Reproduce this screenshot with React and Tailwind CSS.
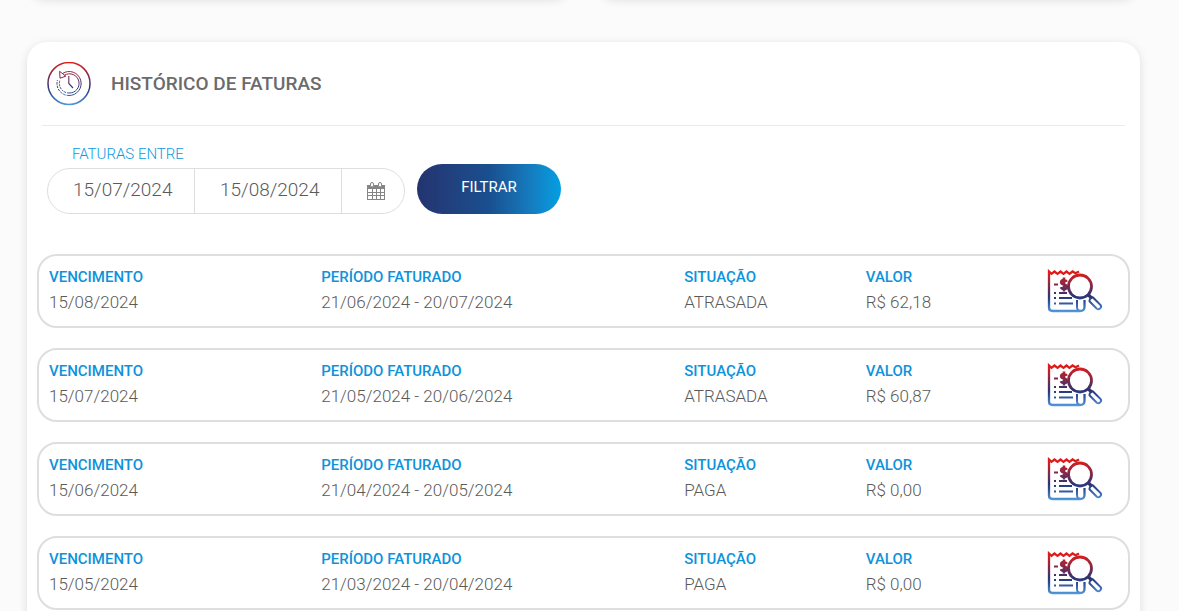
import { useState } from "react"

const invoices = [
  { due: "15/08/2024", period: "21/06/2024 - 20/07/2024", status: "ATRASADA", value: "R$ 62,18" },
  { due: "15/07/2024", period: "21/05/2024 - 20/06/2024", status: "ATRASADA", value: "R$ 60,87" },
  { due: "15/06/2024", period: "21/04/2024 - 20/05/2024", status: "PAGA", value: "R$ 0,00" },
  { due: "15/05/2024", period: "21/03/2024 - 20/04/2024", status: "PAGA", value: "R$ 0,00" },
]

function HistoryIcon() {
  return (
    <svg width="44" height="44" viewBox="0 0 44 44" fill="none" stroke="url(#history-fill)" aria-hidden="true">
      <defs>
        <linearGradient id="history-fill" gradientUnits="userSpaceOnUse" x1="0" y1="0" x2="0" y2="44">
          <stop offset="0" stopColor="#e31b17" />
          <stop offset="0.55" stopColor="#3a3272" />
          <stop offset="0.75" stopColor="#2f56a0" />
          <stop offset="1" stopColor="#559fe3" />
        </linearGradient>
      </defs>
      <circle cx="22" cy="21.500" r="21" strokeWidth="1.5" />
      <path d="M15.500 11.500A12 12 0 1 1 22 33.500" strokeWidth="1" />
      <path d="M17.500 13.200A9.600 9.600 0 1 1 22 31" strokeWidth="1" />
      <path d="M22 33.500A12 12 0 0 1 10.500 18" strokeWidth="1" strokeDasharray="2.500 1" />
      <path d="M22 31A9.600 9.600 0 0 1 13 18" strokeWidth="1" strokeDasharray="2 1" />
      <path d="M12.6 9.300L13 16.200L18.800 14.200Z" strokeWidth="1" />
      <path d="M21.800 14V21.500L26 26" strokeWidth="1.1" />
    </svg>
  )
}

function InvoiceIcon() {
  return (
    <svg width="56" height="44" viewBox="0 0 56 44" fill="none" stroke="url(#invoice-fill)" strokeWidth="2" aria-hidden="true">
      <defs>
        <linearGradient id="invoice-fill" gradientUnits="userSpaceOnUse" x1="0" y1="0" x2="0" y2="44">
          <stop offset="0.1" stopColor="#dd1c1a" />
          <stop offset="0.62" stopColor="#2b3474" />
          <stop offset="0.75" stopColor="#2f4f98" />
          <stop offset="1" stopColor="#559fe3" />
        </linearGradient>
      </defs>
      <path d="M32 2.500L28.500 4.300L25.500 2.500L22.500 4.800L19.500 2.500L16.500 4.800L13.500 2.500L10.500 4.800L7.500 2.500L4.500 4.800L2 2.500V38.500Q2 42 5.500 42H33Q37.500 42 37.500 38V31" strokeWidth="2.300" />
      <path d="M30 31V38Q30 42 33.500 42" />
      <circle cx="33" cy="17.500" r="11.500" strokeWidth="2.800" />
      <path d="M41 25.500L45 29.500" strokeWidth="3.200" />
      <path d="M46 28.500L53.600 36.100Q54.800 37.800 53.200 39.400T49.800 39.700L42.600 32.500Q42.200 31 43.400 29.500T46 28.500Z" strokeWidth="2" />
      <path d="M7 15.500H11M7 24H9M7 29H9M7 34.500H9M12 24H20M12 29H25M12 34.500H26" strokeWidth="2.200" />
      <path d="M19.800 12.800Q19 11 17 11Q14.200 11.200 14.200 13.200Q14.200 15 17 15.400Q19.900 16 19.900 18Q19.900 20 17 20Q14.500 20 14 18.200M17 8.500V22.500" strokeWidth="2.600" />
    </svg>
  )
}

function CalendarIcon() {
  return (
    <svg width="18" height="18" viewBox="0 0 18 18" fill="none" aria-hidden="true">
      <path d="M0 3H18V18H0Z" fill="#858585" />
      <path d="M1 7H5V10H1ZM6 7H9V10H6ZM10 7H13V10H10ZM14 7H17V10H14ZM1 11H5V13H1ZM6 11H9V13H6ZM10 11H13V13H10ZM14 11H17V13H14ZM1 14H5V17H1ZM6 14H9V17H6ZM10 14H13V17H10ZM14 14H17V17H14Z" fill="#fff" />
      <rect x="3.500" y="0.500" width="3" height="4.500" rx="1.500" fill="#fff" stroke="#858585" />
      <rect x="11.500" y="0.500" width="3" height="4.500" rx="1.500" fill="#fff" stroke="#858585" />
    </svg>
  )
}

function Field({ label, value, className }) {
  return (
    <div className={className}>
      <dt className="text-[15px] leading-[25px] font-medium text-[#0d93db]">{label}</dt>
      <dd className="text-[17px] leading-[25px] font-light text-[#5a5a5a]">{value}</dd>
    </div>
  )
}

export default function App() {

  const [start, setStart] = useState("15/07/2024")
  const [end, setEnd] = useState("15/08/2024")

  return (

    <div className="h-screen overflow-hidden bg-[#fbfbfb] pl-[27px] pr-[39px] font-['Roboto','Liberation_Sans',sans-serif]">

      {/* Cards above */}

      <div className="grid grid-cols-2 gap-6 -mt-20">
        <div className="h-20 rounded-[20px] bg-white shadow-[0_0_10px_rgba(0,0,0,0.12)]" />
        <div className="h-20 rounded-[20px] bg-white shadow-[0_0_10px_rgba(0,0,0,0.12)]" />
      </div>

      {/* Invoice history */}

      <section className="mt-[42px] rounded-[20px] bg-white pb-5 shadow-[0_2px_10px_rgba(0,0,0,0.12)]">

        <header className="mx-[15px] flex items-center gap-5 border-b border-[#ebebeb] px-[5px] pt-5 pb-[19px]">
          <HistoryIcon />
          <h1 className="text-[19px] leading-6 font-medium text-[#6b6b6b]">HISTÓRICO DE FATURAS</h1>
        </header>

        <form className="flex items-end gap-3 px-5 pt-4" onSubmit={(e) => e.preventDefault()}>

          <div>
            <label htmlFor="start" className="block pb-[2px] pl-[25px] text-[15px] leading-6 font-light text-[#0d9be0]">
              FATURAS ENTRE
            </label>
            <div className="flex h-[46px] w-[358px] overflow-hidden rounded-full border border-[#dedede] text-[#5a5a5a]">
              <input
                id="start"
                value={start}
                onChange={(e) => setStart(e.target.value)}
                className="w-[147px] border-r border-[#dedede] pb-[2px] pl-[25px] text-[19px] font-light outline-none"
              />
              <input
                aria-label="Data final"
                value={end}
                onChange={(e) => setEnd(e.target.value)}
                className="w-[147px] border-r border-[#dedede] pb-[2px] pl-[25px] text-[19px] font-light outline-none"
              />
              <button type="button" aria-label="Abrir calendário" className="flex flex-1 items-center justify-center pl-[6px] cursor-pointer">
                <CalendarIcon />
              </button>
            </div>
          </div>

          <button
            type="submit"
            className="h-[50px] w-36 rounded-full bg-linear-to-r from-[#23346f] via-[#194f8f] to-[#009fe3] pb-1 text-[15px] text-white cursor-pointer"
          >
            FILTRAR
          </button>

        </form>

        <ul className="mt-10 flex flex-col gap-5 px-[10px]">
          {invoices.map((invoice) => (
            <li key={invoice.due} className="flex h-[74px] rounded-[20px] border-2 border-[#dedede] pt-[9px]">
              <dl className="grid flex-1 grid-cols-12">
                <Field label="VENCIMENTO" value={invoice.due} className="col-span-3 pl-[10px]" />
                <Field label="PERÍODO FATURADO" value={invoice.period} className="col-span-4 pl-[10px]" />
                <Field label="SITUAÇÃO" value={invoice.status} className="col-span-2 pl-[10px]" />
                <Field label="VALOR" value={invoice.value} className="col-span-2 pl-[10px]" />
                <dd className="col-span-1 pt-1 pl-[10px]">
                  <button type="button" aria-label="Ver fatura" className="block cursor-pointer">
                    <InvoiceIcon />
                  </button>
                </dd>
              </dl>
            </li>
          ))}
        </ul>

      </section>

    </div>

  )
}
